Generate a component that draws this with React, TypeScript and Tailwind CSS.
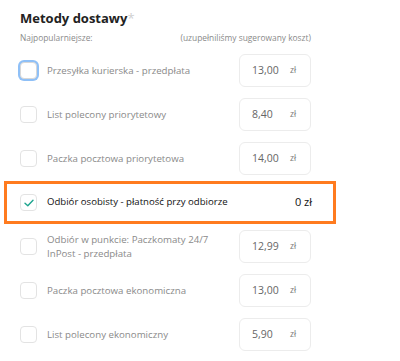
import React from "react";

const rows: { label: string; price?: string; focus?: boolean; selected?: boolean }[] = [
  { label: "Przesyłka kurierska - przedpłata", price: "13,00", focus: true },
  { label: "List polecony priorytetowy", price: "8,40" },
  { label: "Paczka pocztowa priorytetowa", price: "14,00" },
  { label: "Odbiór osobisty - płatność przy odbiorze", selected: true },
  { label: "Odbiór w punkcie: Paczkomaty 24/7 InPost - przedpłata", price: "12,99" },
  { label: "Paczka pocztowa ekonomiczna", price: "13,00" },
  { label: "List polecony ekonomiczny", price: "5,90" },
];

function Checkbox({ focus, checked }: { focus?: boolean; checked?: boolean }) {
  if (focus) {
    return (
      <div className="w-[17px] h-[17px] shrink-0 rounded-[4px] border border-[#d8d8d8] bg-white shadow-[0_0_0_2px_#8fc0f7]" />
    );
  }
  return (
    <div className="w-[17px] h-[17px] shrink-0 rounded-[4px] border border-[#e3e3e3] bg-white flex items-center justify-center">
      {checked && (
        <svg width="10" height="8" viewBox="0 0 10 8" fill="none">
          <path d="M1 4.2 L3.8 6.8 L9 1.2" stroke="#1fa58f" strokeWidth="1.4" strokeLinecap="round" strokeLinejoin="round" />
        </svg>
      )}
    </div>
  );
}

export default function App() {
  return (
    <div
      className="w-[400px] h-[361px] bg-white overflow-hidden pl-[20px] pt-[8px]"
      style={{ fontFamily: '"Open Sans", "Liberation Sans", sans-serif' }}
    >
      <div className="text-[13px] leading-[20px] font-bold text-[#222]">
        Metody dostawy<span className="text-[#cfcfcf] font-normal">*</span>
      </div>
      <div className="w-[291px] flex justify-between items-center text-[8.4px] leading-[12px] text-[#8a8a8a] mt-[4px]">
        <span>Najpopularniejsze:</span>
        <span>(uzupełniliśmy sugerowany koszt)</span>
      </div>
      <div className="w-[291px] flex flex-col gap-[11px] mt-[10px]">
        {rows.map((r, i) =>
          r.selected ? (
            <div
              key={i}
              className="flex items-center h-[43px] -my-[5px] ml-[-16px] mr-[-25px] pl-[13px] pr-[21px] border-[3px] border-[#ff7b1f]"
            >
              <Checkbox checked />
              <div className="flex-1 ml-[10px] text-[9.6px] text-[#111]">{r.label}</div>
              <div className="text-[11px] text-[#111]">0 zł</div>
            </div>
          ) : (
            <div key={i} className="flex items-center h-[33px]">
              <Checkbox focus={r.focus} />
              <div className="w-[170px] ml-[10px] text-[9.7px] leading-[14px] text-[#8a8a8a]">{r.label}</div>
              <div className="ml-auto w-[72px] h-[33px] rounded-[6px] border border-[#ececec] flex items-center pl-[12px]">
                <span className="text-[10.5px] text-[#666] w-[38px]">{r.price}</span>
                <span className="text-[8.5px] text-[#777]">zł</span>
              </div>
            </div>
          )
        )}
      </div>
    </div>
  );
}
